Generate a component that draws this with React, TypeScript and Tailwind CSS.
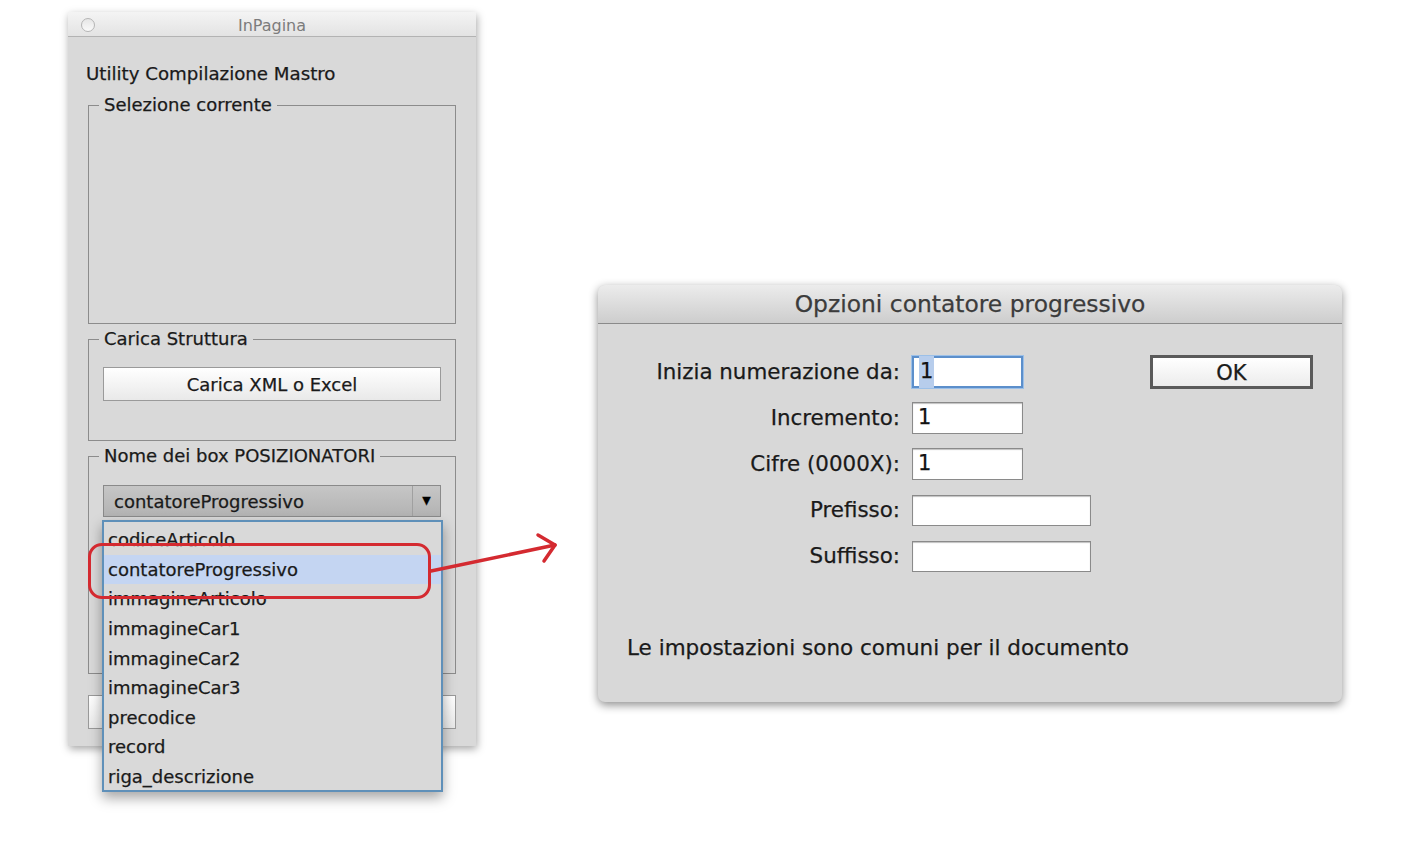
import React from "react";

const items = [
  "codiceArticolo",
  "contatoreProgressivo",
  "immagineArticolo",
  "immagineCar1",
  "immagineCar2",
  "immagineCar3",
  "precodice",
  "record",
  "riga_descrizione",
];

const font = { fontFamily: '"DejaVu Sans", "Liberation Sans", sans-serif' };

function Group({ title, className, children }: { title: string; className: string; children?: React.ReactNode }) {
  return (
    <fieldset className={`border border-[#8c8c8c] px-[14px] ${className}`}>
      <legend className="ml-[-4px] px-[5px] text-[18px] leading-[22px] text-[#1a1a1a]">{title}</legend>
      {children}
    </fieldset>
  );
}

function Field({ label, value, wide, focus }: { label: string; value?: string; wide?: boolean; focus?: boolean }) {
  return (
    <>
      <div className="flex h-[34px] items-center justify-end text-[21.4px] text-[#1a1a1a]">{label}</div>
      <div className="flex h-[34px] items-center">
        <div
          className={`flex items-center bg-white pl-[5px] text-[21px] text-[#111] ${wide ? "h-[31px] w-[179px]" : "h-[32px] w-[111px]"} ${
            focus ? "border-2 border-[#5c8fcb] shadow-[0_0_0_1px_#9cc0e8]" : "border border-[#8a8a8a] shadow-[inset_0_1px_1px_rgba(0,0,0,0.25)]"
          }`}
        >
          {value && <span className={focus ? "bg-[#b7cdec] px-[1px]" : ""}>{value}</span>}
        </div>
      </div>
    </>
  );
}

export default function App() {
  return (
    <div className="relative h-[858px] w-[1408px] overflow-hidden bg-white [-webkit-text-stroke:0.25px]" style={font}>
      {/* left window */}
      <div className="absolute left-[68px] top-[12px] flex h-[734px] w-[408px] flex-col bg-[#d9d9d9] shadow-[1px_3px_8px_rgba(0,0,0,0.35)]">
        <div className="grid h-[25px] grid-cols-[1fr_auto_1fr] items-center border-b border-[#b3b3b3] bg-gradient-to-b from-[#f4f4f4] to-[#e3e3e3]">
          <div className="pl-[13px]">
            <div className="h-[14px] w-[14px] rounded-full border border-[#b5b5b5] bg-gradient-to-b from-[#e6e6e6] to-[#fafafa]" />
          </div>
          <div className="pt-[2px] text-[16px] text-[#7c7c7c] [-webkit-text-stroke:0px]">InPagina</div>
          <div />
        </div>
        <div className="flex flex-col px-[20px] pt-[27px]">
          <div className="ml-[-2px] text-[18.2px] leading-[20px] text-[#1a1a1a]">Utility Compilazione Mastro</div>
          <Group title="Selezione corrente" className="mt-[10px] h-[230px]" />
          <Group title="Carica Struttura" className="mt-[4px] h-[113px]">
            <button className="mt-[17px] h-[34px] w-full border border-[#9a9a9a] bg-gradient-to-b from-[#ffffff] to-[#e9e9e9] text-[18px] text-[#1a1a1a]">
              Carica XML o Excel
            </button>
          </Group>
          <Group title="Nome dei box POSIZIONATORI" className="mt-[4px] h-[229px]">
            <div className="mt-[18px] flex h-[32px] w-full border border-[#8a8a8a] bg-gradient-to-b from-[#c6c6c6] to-[#b3b3b3]">
              <div className="flex flex-1 items-center pl-[10px] text-[18px] text-[#1a1a1a]">contatoreProgressivo</div>
              <div className="flex w-[28px] items-center justify-center border-l border-[#a0a0a0] text-[11px] text-black">▼</div>
            </div>
          </Group>
          <div className="mt-[21px] h-[34px] border border-[#9a9a9a] bg-gradient-to-b from-[#ffffff] to-[#e9e9e9]" />
        </div>
      </div>

      {/* dropdown list */}
      <div className="absolute left-[102px] top-[520px] h-[272px] w-[341px] border-2 border-[#5f90b9] bg-[#d9d9d9] pt-[3px] shadow-[0_6px_12px_rgba(0,0,0,0.35)]">
        {items.map((it, i) => (
          <div
            key={it}
            className={`flex h-[29.6px] items-center pl-[4px] text-[18px] text-[#1a1a1a] ${i === 1 ? "bg-[#c4d5f2]" : ""}`}
          >
            {it}
          </div>
        ))}
      </div>

      {/* annotation */}
      <div className="absolute left-[88px] top-[543px] h-[56px] w-[343px] rounded-[14px] border-[3px] border-[#d42a30]" />
      <svg className="pointer-events-none absolute left-0 top-0" width="1408" height="858">
        <g stroke="#d42a30" strokeWidth="3.5" fill="none" strokeLinecap="round" strokeLinejoin="round">
          <line x1="431" y1="571" x2="555" y2="545" />
          <polyline points="538,535 555,545 544,561" />
        </g>
      </svg>

      {/* right dialog */}
      <div className="absolute left-[598px] top-[285px] flex h-[417px] w-[744px] flex-col overflow-hidden rounded-[7px] bg-[#d8d8d8] shadow-[0_3px_10px_rgba(0,0,0,0.45)]">
        <div className="flex h-[39px] items-center justify-center border-b border-[#8a8a8a] bg-gradient-to-b from-[#ececec] to-[#cdcdcd] pt-[1px] text-[23.4px] text-[#3c3c3c]">
          Opzioni contatore progressivo
        </div>
        <div className="flex pt-[31px]">
          <div className="grid grid-cols-[302px_auto] gap-x-[12px] gap-y-[12px]">
            <Field label="Inizia numerazione da:" value="1" focus />
            <Field label="Incremento:" value="1" />
            <Field label="Cifre (0000X):" value="1" />
            <Field label="Prefisso:" wide />
            <Field label="Suffisso:" wide />
          </div>
          <button className="ml-auto mr-[29px] h-[34px] w-[163px] border-[3px] border-[#5a5a5a] bg-gradient-to-b from-[#ffffff] to-[#ececec] text-[21px] text-[#1a1a1a]">
            OK
          </button>
        </div>
        <div className="mt-[64px] pl-[29px] text-[21.5px] leading-[22px] text-[#1a1a1a]">
          Le impostazioni sono comuni per il documento
        </div>
      </div>
    </div>
  );
}
